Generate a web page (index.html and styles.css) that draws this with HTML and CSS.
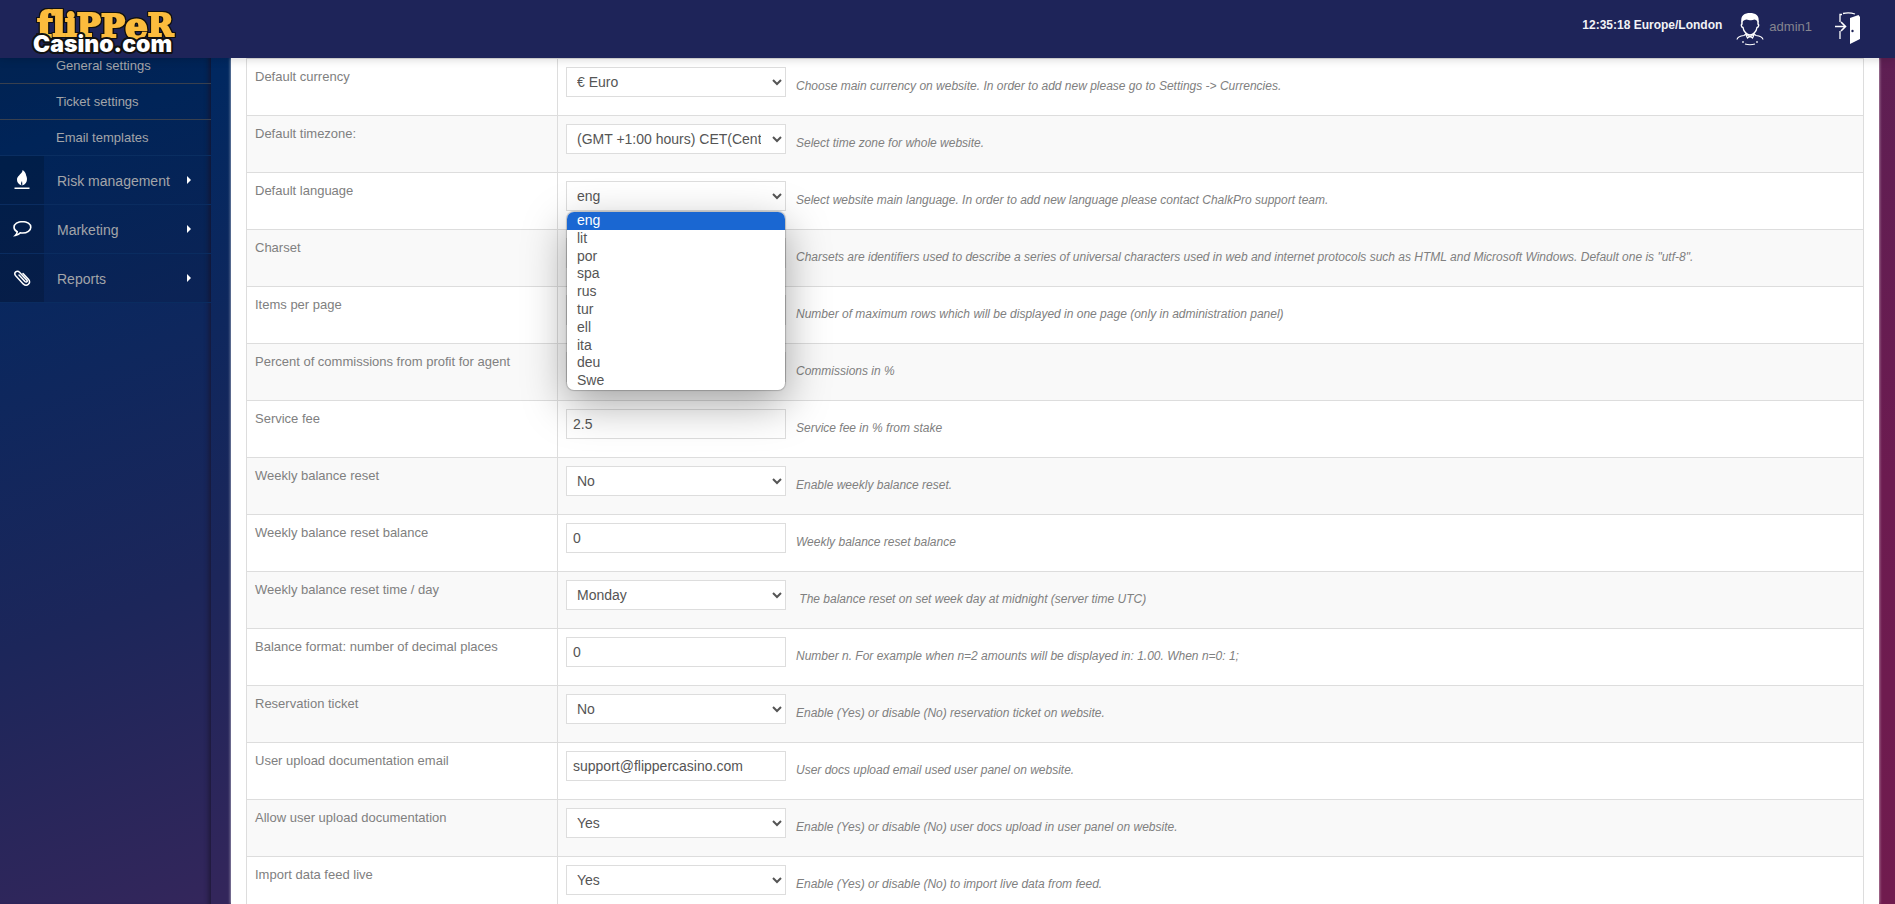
FILE: index.html
```html
<!DOCTYPE html>
<html lang="en">
<head>
<meta charset="utf-8">
<title>Flipper Casino - General settings</title>
<link rel="stylesheet" href="styles.css">
</head>
<body>
<header class="topbar">
  <a class="logo" href="#" aria-label="FlipperCasino.com">
    <svg width="156" height="54" viewBox="0 0 156 54">
      <text class="logo-top" x="7" y="33"><tspan font-size="36">f</tspan><tspan font-size="33" dy="-1">l</tspan><tspan font-size="31">i</tspan><tspan font-size="32">P</tspan><tspan font-size="32" dy="1">P</tspan><tspan font-size="36" dy="1">e</tspan><tspan font-size="31" dy="-2">R</tspan></text>
      <text class="logo-bottom" x="3" y="48">Casino.com</text>
    </svg>
  </a>
  <div class="session">
    <span class="clock">12:35:18 Europe/London</span>
    <a class="account" href="#">
      <svg class="user-icon" width="28" height="34" viewBox="0 0 28 34" fill="none" stroke="#fff">
        <path d="M5.500 11C4 3 9 1 14 1s10 2 8.500 10c-1-2-2-3-4-3.500-3 1.500-6 .5-8 0-2.500.5-4 1.500-5 3.500z" fill="#fff" stroke="none"/>
        <path d="M6 9v3c-1 0-1 3 1 3.500.5 4 4 7.500 7 7.500s6.500-3.500 7-7.500c2-.5 2-3.500 1-3.500V9" stroke-width="1.400"/>
        <path d="M10 21v1l4 3 4-3v-1M10 22l-2 1.500c-4 .5-6.500 1.500-7 4M18 22l2 1.500c4 .5 6.500 1.500 7 4M10 23l1.500 3 2.500-2 2.500 2L18 23" stroke-width="1.200"/>
        <path d="M7 29v2M21 29v2M9 32q5 1.500 10 0" stroke-width="1.200"/>
      </svg>
      <span>admin1</span>
    </a>
    <a class="logout" href="#" aria-label="Log out">
      <svg width="26" height="34" viewBox="0 0 26 34" fill="none" stroke="#fff">
        <path d="M5 10V2.500h2M8 1.500q6-1.500 12 .5M5 19v8" stroke-width="1.300"/>
        <path d="M0 14.500h10M6 10l4.500 4.500L6 19" stroke-width="1.600"/>
        <path d="M15 6l8.500-3 1.500 2v22l-10 5z" fill="#fff" stroke="none"/>
        <circle cx="17.500" cy="19" r="1.200" fill="#1e2459" stroke="none"/>
      </svg>
    </a>
  </div>
</header>

<div class="page">
  <nav class="sidebar">
    <ul class="submenu">
      <li><a href="#">General settings</a></li>
      <li><a href="#">Ticket settings</a></li>
      <li><a href="#">Email templates</a></li>
    </ul>
    <ul class="menu">
      <li><a href="#">
        <span class="menu-icon"><svg width="16" height="20" viewBox="0 0 16 20" fill="#fff"><path d="M8.500 0C9 3 3.500 5.500 3 9c-.3 3 1.500 5.500 4.800 6.500C6.500 14 7 12.500 8 11c.4 1.500.2 3 .3 4.500C11.500 14.500 13 12 13 9c0-2.500-1-3-1.200-5C11.500 2.500 10 1 8.500 0z"/><path d="M.5 17.500h15V19H.5z"/></svg></span>
        <span class="menu-text">Risk management</span><span class="caret"></span></a></li>
      <li><a href="#">
        <span class="menu-icon"><svg width="20" height="18" viewBox="0 0 20 18" fill="none" stroke="#fff" stroke-width="1.600"><path d="M10.500 1.500c-4.700 0-8.500 2.500-8.500 5.700 0 1.900 1.200 3.500 3.200 4.600-.2 1.700-1 2.800-1.900 3.700 2.200-.3 3.800-1.200 5-2.700.7.1 1.400.2 2.200.2 4.700 0 8.300-2.600 8.300-5.800s-3.600-5.700-8.300-5.700z"/></svg></span>
        <span class="menu-text">Marketing</span><span class="caret"></span></a></li>
      <li><a href="#">
        <span class="menu-icon"><svg width="18" height="18" viewBox="0 0 18 18" fill="none" stroke="#fff" stroke-width="1.500" stroke-linecap="round"><path d="M6 6l6 6.500c1.500 1.500 3-.2 1.700-1.600L6.500 3.200C4 .7.200 3.800 2.700 6.700l7.500 8.200c3.800 3.600 8.300-1 5.200-4.700L10 4.500"/></svg></span>
        <span class="menu-text">Reports</span><span class="caret"></span></a></li>
    </ul>
  </nav>

  <main class="content">
    <table class="settings">
      <tbody>
        <tr><th scope="row"><label for="currency">Default currency</label></th><td><div class="field"><select id="currency"><option>€ Euro</option></select><span class="hint">Choose main currency on website. In order to add new please go to Settings -&gt; Currencies.</span></div></td></tr>
        <tr><th scope="row"><label for="timezone">Default timezone:</label></th><td><div class="field"><select id="timezone"><option>(GMT +1:00 hours) CET(Central Europe Time)</option></select><span class="hint">Select time zone for whole website.</span></div></td></tr>
        <tr><th scope="row"><label for="language">Default language</label></th><td><div class="field">
          <select id="language"><option>eng</option><option>lit</option><option>por</option><option>spa</option><option>rus</option><option>tur</option><option>ell</option><option>ita</option><option>deu</option><option>Swe</option></select>
          <ul class="options" role="listbox" aria-label="Default language">
            <li role="option" aria-selected="true">eng</li>
            <li role="option">lit</li>
            <li role="option">por</li>
            <li role="option">spa</li>
            <li role="option">rus</li>
            <li role="option">tur</li>
            <li role="option">ell</li>
            <li role="option">ita</li>
            <li role="option">deu</li>
            <li role="option">Swe</li>
          </ul>
          <span class="hint">Select website main language. In order to add new language please contact ChalkPro support team.</span></div></td></tr>
        <tr><th scope="row"><label for="charset">Charset</label></th><td><div class="field"><input id="charset" type="text"><span class="hint">Charsets are identifiers used to describe a series of universal characters used in web and internet protocols such as HTML and Microsoft Windows. Default one is "utf-8".</span></div></td></tr>
        <tr><th scope="row"><label for="items">Items per page</label></th><td><div class="field"><input id="items" type="text"><span class="hint">Number of maximum rows which will be displayed in one page (only in administration panel)</span></div></td></tr>
        <tr><th scope="row"><label for="commission">Percent of commissions from profit for agent</label></th><td><div class="field"><input id="commission" type="text"><span class="hint">Commissions in %</span></div></td></tr>
        <tr><th scope="row"><label for="fee">Service fee</label></th><td><div class="field"><input id="fee" type="text" value="2.5"><span class="hint">Service fee in % from stake</span></div></td></tr>
        <tr><th scope="row"><label for="reset">Weekly balance reset</label></th><td><div class="field"><select id="reset"><option>No</option><option>Yes</option></select><span class="hint">Enable weekly balance reset.</span></div></td></tr>
        <tr><th scope="row"><label for="reset-balance">Weekly balance reset balance</label></th><td><div class="field"><input id="reset-balance" type="text" value="0"><span class="hint">Weekly balance reset balance</span></div></td></tr>
        <tr><th scope="row"><label for="reset-day">Weekly balance reset time / day</label></th><td><div class="field"><select id="reset-day"><option>Monday</option></select><span class="hint">&nbsp;The balance reset on set week day at midnight (server time UTC)</span></div></td></tr>
        <tr><th scope="row"><label for="decimals">Balance format: number of decimal places</label></th><td><div class="field"><input id="decimals" type="text" value="0"><span class="hint">Number n. For example when n=2 amounts will be displayed in: 1.00. When n=0: 1;</span></div></td></tr>
        <tr><th scope="row"><label for="reservation">Reservation ticket</label></th><td><div class="field"><select id="reservation"><option>No</option><option>Yes</option></select><span class="hint">Enable (Yes) or disable (No) reservation ticket on website.</span></div></td></tr>
        <tr><th scope="row"><label for="docs-email">User upload documentation email</label></th><td><div class="field"><input id="docs-email" type="text" value="support@flippercasino.com"><span class="hint">User docs upload email used user panel on website.</span></div></td></tr>
        <tr><th scope="row"><label for="docs">Allow user upload documentation</label></th><td><div class="field"><select id="docs"><option>Yes</option><option>No</option></select><span class="hint">Enable (Yes) or disable (No) user docs upload in user panel on website.</span></div></td></tr>
        <tr><th scope="row"><label for="feed">Import data feed live</label></th><td><div class="field"><select id="feed"><option>Yes</option><option>No</option></select><span class="hint">Enable (Yes) or disable (No) to import live data from feed.</span></div></td></tr>
      </tbody>
    </table>
  </main>
</div>
</body>
</html>
```
FILE: styles.css
```css
* { box-sizing: border-box; }

body {
  margin: 0;
  height: 100vh;
  display: flex;
  flex-direction: column;
  overflow: hidden;
  font: 13px/20px "Liberation Sans", Arial, sans-serif;
  color: #808080;
}

a { color: inherit; text-decoration: none; }
ul { margin: 0; padding: 0; list-style: none; }
svg { display: block; }

/* Top bar */
.topbar {
  flex: none;
  display: flex;
  justify-content: space-between;
  height: 58px;
  padding: 0 34px 0 30px;
  background: #1e2459;
  box-shadow: 0 0 10px rgba(0, 0, 0, 0.2);
  position: relative;
  z-index: 5;
}

.logo { padding-top: 4px; }
.logo svg { overflow: visible; }

.logo-top {
  font-family: "DejaVu Serif", serif;
  font-weight: 700;
  fill: #fbbc3d;
  stroke: #fbbc3d;
  stroke-width: 2px;
  filter: drop-shadow(1px 0 0 #111) drop-shadow(-1px 0 0 #111) drop-shadow(0 1px 0 #111) drop-shadow(0 -1px 0 #111);
}
.logo-bottom {
  font: 900 23px Inter, "Liberation Sans", sans-serif;
  fill: #fff;
  stroke: #111;
  stroke-width: 4px;
  stroke-linejoin: round;
  paint-order: stroke;
}

.session { display: flex; align-items: flex-start; padding-top: 12px; }
.clock { margin: 3px 14px 0 0; color: #f2f2f6; font-size: 12px; font-weight: 700; }
.account { display: flex; gap: 5px; margin-right: 23px; color: #85858f; }
.account span { padding-top: 5px; }

/* Page frame */
.page {
  flex: 1;
  min-height: 0;
  display: flex;
  padding-right: 16px;
  background:
    linear-gradient(160deg, #02265a 0, #012860 90px, #1c265a 560px, #33265b 860px) 0 0 / 231px 100% no-repeat,
    linear-gradient(#5e1f53, #6c1b50 50%, #701b4e);
}

.sidebar {
  flex: none;
  width: 211px;
  margin-right: 20px;
  box-shadow: inset -6px 0 5px -4px rgba(25, 20, 45, 0.8);
}

.submenu { background: rgba(0, 0, 0, 0.08); }
.submenu a {
  display: block;
  height: 36px;
  padding: 8px 0 0 56px;
  border-bottom: 1px solid #39404e;
  color: #a3a5a9;
}
.submenu li:first-child a { height: 26px; padding-top: 0; line-height: 16px; }
.submenu li:last-child a { border-bottom-color: #0a2e61; }

.menu { background: rgba(0, 0, 0, 0.08); }
.menu a {
  display: flex;
  align-items: center;
  height: 49px;
  border-bottom: 1px solid #0a2c60;
  color: #a3a5a9;
  font-size: 14px;
}
.menu-icon {
  flex: none;
  display: flex;
  align-items: center;
  justify-content: center;
  width: 44px;
  height: 48px;
  background: rgba(0, 0, 0, 0.16);
}
.menu-text { flex: 1; padding: 2px 0 0 13px; }
.caret {
  margin-right: 20px;
  border: 4px solid transparent;
  border-left-color: #fff;
  border-right-width: 0;
}

.content {
  flex: 1;
  min-width: 0;
  padding: 0 15px;
  background: #fff;
  box-shadow: 0 0 3px rgba(255, 255, 255, 0.8);
}

/* Settings table */
.settings { width: 100%; border-collapse: collapse; table-layout: fixed; }
.settings th,
.settings td {
  height: 57px;
  padding: 8px;
  border: 1px solid #ddd;
  font-weight: 400;
  text-align: left;
  vertical-align: top;
}
.settings th { width: 311px; }
.settings tr:nth-child(even) { background: #f9f9f9; }
.settings label { display: block; }

.field { position: relative; display: flex; align-items: flex-start; gap: 10px; height: 40px; }
.field select,
.field input {
  flex: none;
  width: 220px;
  height: 30px;
  margin: 0;
  padding: 4px 6px;
  border: 1px solid #ddd;
  border-radius: 0;
  background: #fff;
  color: #555;
  font: 14px/20px "Liberation Sans", Arial, sans-serif;
}
.field select { padding-right: 8px; }
.hint { font-size: 12px; font-style: italic; line-height: 38px; }

.options {
  position: absolute;
  top: 31px;
  left: 1px;
  z-index: 2;
  display: grid;
  grid-template-rows: repeat(10, 1fr);
  width: 218px;
  height: 178px;
  border-radius: 7px;
  overflow: hidden;
  background: #fff;
  box-shadow: 0 0 1px 1px rgba(0, 0, 0, 0.2), 0 14px 44px rgba(0, 0, 0, 0.35);
  color: #555;
  font-size: 14px;
  line-height: 17px;
}
.options li { padding-left: 10px; }
.options [aria-selected="true"] { background: #1a67d2; color: #fff; }
```
